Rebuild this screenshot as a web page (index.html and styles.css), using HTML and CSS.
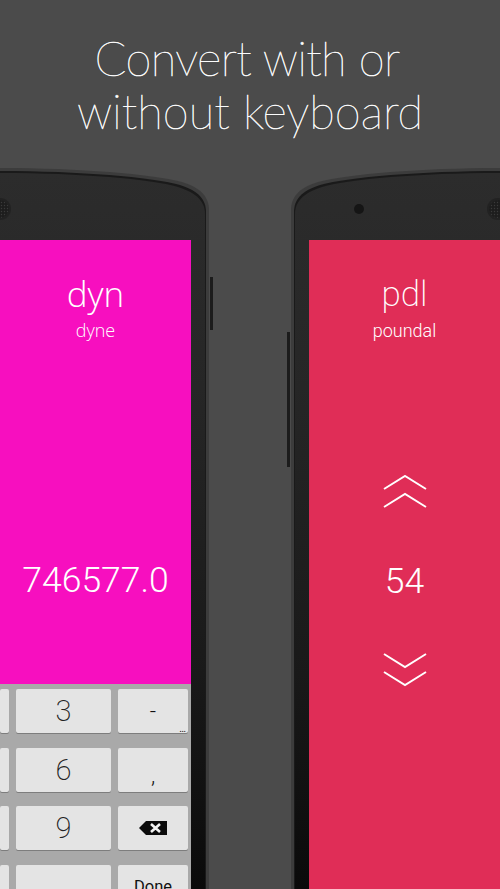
FILE: index.html
```html
<!DOCTYPE html>
<html lang="en">
<head>
<meta charset="utf-8">
<title>Convert with or without keyboard</title>
<link rel="stylesheet" href="styles.css">
</head>
<body>
<main class="page">
  <h1 class="headline"><span class="line-first">Convert with or</span><br>without keyboard</h1>
  <div class="stage">
    <section class="phone phone-left">
      <svg class="shell" width="214" height="721" viewBox="0 0 214 721" aria-hidden="true">
        <defs>
          <linearGradient id="bodyL" x1="0" y1="0" x2="0" y2="1">
            <stop offset="0" stop-color="#2c2c2c"/>
            <stop offset="0.3" stop-color="#262626"/>
            <stop offset="0.7" stop-color="#191919"/>
            <stop offset="1" stop-color="#0a0a0a"/>
          </linearGradient>
          <pattern id="meshL" width="3" height="3" patternUnits="userSpaceOnUse">
            <rect width="3" height="3" fill="#1d1d1d"/>
            <circle cx="1.5" cy="1.5" r="0.7" fill="#3a3a3a"/>
          </pattern>
        </defs>
        <rect x="210" y="109" width="3" height="53" fill="#1c1c1c"/>
        <path d="M-2 0C80 0 150 6 182 14C202 20 209 30 209 42V721H-2Z" fill="#3c3c3c"/>
        <path d="M-2 3C80 3 150 9 180 17C199 23 206 32 206 44V721H-2Z" fill="#1a1a1a"/>
        <path d="M-2 5C80 5 150 11 178 19C197 25 205 34 205 46V721H-2Z" fill="url(#bodyL)"/>
        <circle cx="0" cy="41" r="11" fill="#222"/>
        <circle cx="0" cy="41" r="9" fill="url(#meshL)"/>
      </svg>
      <div class="screen screen-pink">
        <div class="unit">
          <div class="symbol">dyn</div>
          <div class="name">dyne</div>
        </div>
        <div class="value value-input">746577.0</div>
        <div class="keyboard">
          <div class="key"></div>
          <div class="key">3</div>
          <div class="key key-dash">-<span class="more">…</span></div>
          <div class="key"></div>
          <div class="key">6</div>
          <div class="key key-comma">,</div>
          <div class="key"></div>
          <div class="key">9</div>
          <div class="key">
            <svg width="28" height="14" viewBox="0 0 28 14" aria-hidden="true">
              <path d="M0 7L7 0H28V14H7Z" fill="#0b0b0b"/>
              <path d="M12 3L21 11M21 3L12 11" stroke="#f2f2f2" stroke-width="2.6" fill="none"/>
            </svg>
          </div>
          <div class="key"></div>
          <div class="key"></div>
          <div class="key key-done">Done</div>
        </div>
      </div>
    </section>
    <section class="phone phone-right">
      <svg class="shell" width="214" height="721" viewBox="0 0 214 721" aria-hidden="true">
        <defs>
          <linearGradient id="bodyR" x1="0" y1="0" x2="0" y2="1">
            <stop offset="0" stop-color="#2c2c2c"/>
            <stop offset="0.3" stop-color="#262626"/>
            <stop offset="0.7" stop-color="#191919"/>
            <stop offset="1" stop-color="#0a0a0a"/>
          </linearGradient>
          <pattern id="meshR" width="3" height="3" patternUnits="userSpaceOnUse">
            <rect width="3" height="3" fill="#1d1d1d"/>
            <circle cx="1.5" cy="1.5" r="0.7" fill="#3a3a3a"/>
          </pattern>
        </defs>
        <rect x="1" y="164" width="3" height="135" fill="#1c1c1c"/>
        <path d="M216 0C134 0 64 6 32 14C12 20 5 30 5 42V721H216Z" fill="#3c3c3c"/>
        <path d="M216 3C134 3 64 9 34 17C15 23 8 32 8 44V721H216Z" fill="#1a1a1a"/>
        <path d="M216 5C134 5 64 11 36 19C17 25 9 34 9 46V721H216Z" fill="url(#bodyR)"/>
        <circle cx="73" cy="41" r="5" fill="#151515"/>
        <circle cx="212" cy="41" r="11" fill="#222"/>
        <circle cx="212" cy="41" r="9" fill="url(#meshR)"/>
      </svg>
      <div class="screen screen-red">
        <div class="unit">
          <div class="symbol">pdl</div>
          <div class="name">poundal</div>
        </div>
        <svg class="chevrons chevrons-up" width="44" height="34" viewBox="0 0 44 34" aria-hidden="true">
          <path d="M1 14L22 1L43 14M1 32L22 19L43 32" fill="none" stroke="#fff" stroke-width="2"/>
        </svg>
        <div class="value value-stepper">54</div>
        <svg class="chevrons chevrons-down" width="44" height="34" viewBox="0 0 44 34" aria-hidden="true">
          <path d="M1 1L22 14L43 1M1 19L22 32L43 19" fill="none" stroke="#fff" stroke-width="2"/>
        </svg>
      </div>
    </section>
  </div>
</main>
</body>
</html>
```

FILE: styles.css
```css
html, body {
  margin: 0;
  padding: 0;
}

.page {
  width: 500px;
  height: 889px;
  overflow: hidden;
  background: #4b4b4b;
  display: flex;
  flex-direction: column;
  font-family: "Open Sans", sans-serif;
  color: #fff;
}

.headline {
  margin: 0;
  height: 168px;
  padding-top: 32px;
  box-sizing: border-box;
  text-align: center;
  font-family: Lato, sans-serif;
  font-weight: 100;
  font-size: 47px;
  line-height: 53px;
  -webkit-text-stroke: 0.5px #fff;
  opacity: 0.99;
}

.line-first {
  margin-right: 6px;
  letter-spacing: -0.65px;
}

.stage {
  display: flex;
  justify-content: space-between;
  height: 721px;
}

.phone {
  position: relative;
  width: 209px;
  display: flex;
}

.phone-left {
  justify-content: flex-start;
}

.phone-right {
  justify-content: flex-end;
}

.shell {
  position: absolute;
  top: 0;
  left: 0;
}

.phone-right .shell {
  left: -5px;
}

.screen {
  position: relative;
  width: 191px;
  margin-top: 72px;
  display: flex;
  flex-direction: column;
  align-items: center;
}

.screen-pink {
  background: #f70fbf;
}

.screen-red {
  background: #e02d57;
  font-family: Roboto, sans-serif;
}

.unit {
  margin-top: 31px;
  text-align: center;
}

.symbol {
  font-size: 35px;
  font-weight: 300;
  line-height: 46px;
}

.screen-red .symbol {
  line-height: 48px;
  font-weight: 200;
}

.name {
  font-size: 18px;
  font-weight: 300;
  line-height: 26px;
}

.screen-red .name {
  line-height: 24px;
}

.value {
  font-weight: 300;
  font-size: 35.5px;
  line-height: 44px;
}

.value-input {
  margin-top: 215px;
  font-family: Roboto, sans-serif;
}

.chevrons {
  display: block;
}

.chevrons-up {
  margin-top: 132px;
}

.value-stepper {
  margin-top: 50px;
}

.chevrons-down {
  margin-top: 50px;
}

.keyboard {
  position: absolute;
  left: 0;
  right: 0;
  top: 444px;
  bottom: 0;
  overflow: hidden;
  background: #a9a9a9;
  box-sizing: border-box;
  padding: 5px 3px 0 0;
  display: grid;
  grid-template-columns: 9px 95px 70px;
  grid-auto-rows: 44px;
  column-gap: 7px;
  row-gap: 14.67px;
  font-family: Roboto, sans-serif;
  font-weight: 200;
  color: #222;
}

.key {
  position: relative;
  background: #e4e4e4;
  border-radius: 2px;
  box-shadow: 0 1px 0 #7d7d7d;
  display: flex;
  align-items: center;
  justify-content: center;
  font-size: 29px;
}

.key-dash {
  font-size: 22px;
  font-weight: 300;
  color: #111;
}

.more {
  position: absolute;
  right: 2px;
  bottom: 0;
  font-size: 10px;
  font-weight: 400;
  line-height: 8px;
  color: #111;
}

.key-comma {
  font-size: 22px;
  font-weight: 300;
  color: #111;
  align-items: flex-end;
  padding-bottom: 4px;
  box-sizing: border-box;
}

.key-done {
  font-size: 16.5px;
  font-weight: 400;
  color: #111;
  align-items: flex-start;
  padding-top: 12px;
  box-sizing: border-box;
}
```
